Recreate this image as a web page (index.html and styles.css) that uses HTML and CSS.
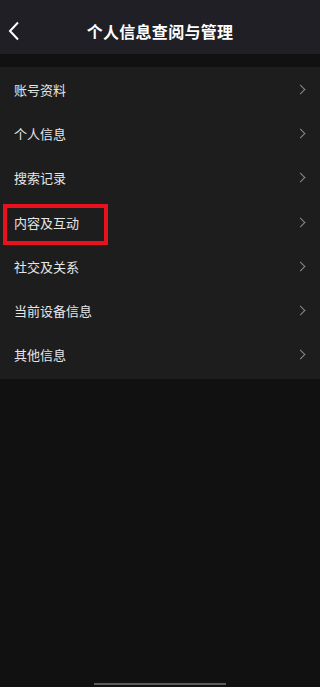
FILE: index.html
```html
<!DOCTYPE html>
<html>
	<head>
		<meta charset="utf-8">
		<title>个人信息查阅与管理</title>
		<link rel="stylesheet" href="styles.css">
	</head>
	<body>
		<div class="page">
			<div class="top">
				<span class="back">
					<svg width="12" height="20" viewBox="0 0 12 20"><path d="M10 1.5 L2 10 L10 18.5" fill="none" stroke="#fff" stroke-width="2"/></svg>
				</span>
				<h1>个人信息查阅与管理</h1>
			</div>
			<ul class="list">
				<li><span>账号资料</span><i class="arr"></i></li>
				<li><span>个人信息</span><i class="arr"></i></li>
				<li><span>搜索记录</span><i class="arr"></i></li>
				<li class="mark"><span>内容及互动</span><i class="arr"></i></li>
				<li><span>社交及关系</span><i class="arr"></i></li>
				<li><span>当前设备信息</span><i class="arr"></i></li>
				<li><span>其他信息</span><i class="arr"></i></li>
			</ul>
			<div class="bar"></div>
		</div>
	</body>
</html>
```

FILE: styles.css
```css
html,body {
	margin: 0;
	padding: 0;
	background-color: #111111;
}

.page {
	width: 320px;
	height: 687px;
	display: flex;
	flex-direction: column;
	font-family: "Noto Sans CJK SC", "Noto Sans", sans-serif;
	color: #e6e6e6;
}

.top {
	height: 54px;
	background-color: #1f1f25;
	display: flex;
	align-items: center;
	justify-content: center;
	position: relative;
}

.back {
	position: absolute;
	left: 8px;
	top: 21px;
	line-height: 0;
}

h1 {
	margin: 0;
	font-size: 16px;
	font-weight: bold;
	color: #ffffff;
	letter-spacing: 0.3px;
	padding-top: 8px;
}

.list {
	list-style: none;
	margin: 13px 0 0 0;
	padding: 0 0 2px 0;
	background-color: #1d1d1d;
}

.list li {
	height: 44.3px;
	display: flex;
	align-items: center;
	justify-content: space-between;
	padding: 0 16px 0 14px;
	font-size: 13px;
	position: relative;
}

.arr {
	width: 6px;
	height: 6px;
	border-top: 1.5px solid #8a8a8a;
	border-right: 1.5px solid #8a8a8a;
	transform: rotate(45deg);
}

.mark::before {
	content: "";
	position: absolute;
	left: 3px;
	top: 4px;
	width: 97px;
	height: 33px;
	border: 4px solid #e8121f;
}

.bar {
	margin-top: auto;
	margin-bottom: 2px;
	align-self: center;
	width: 132px;
	height: 2px;
	background-color: #5c5c5c;
}
```
